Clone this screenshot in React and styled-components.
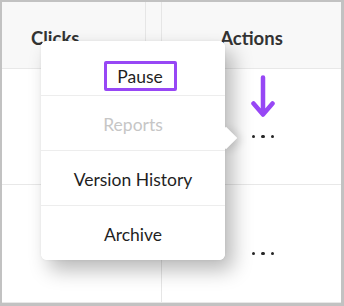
import React from 'react';
import styled, { createGlobalStyle } from 'styled-components';

const GlobalStyle = createGlobalStyle`
  html, body {
    margin: 0;
    padding: 0;
    background: #ffffff;
  }
  body {
    font-family: Lato, "Noto Sans", sans-serif;
  }
`;

const Frame = styled.div`
  position: relative;
  width: 344px;
  height: 306px;
  box-sizing: border-box;
  border-style: solid;
  border-color: #c2c2c2;
  border-width: 2px 3px 3px 2px;
  background: #ffffff;
  overflow: hidden;
`;

const Row = styled.div`
  display: grid;
  grid-template-columns: 144px 16px 1fr;
  height: ${(p) => p.$height}px;
  box-sizing: border-box;
  background: ${(p) => (p.$head ? '#f8f8f8' : '#ffffff')};
  border-bottom: 1px solid #e8e8e8;
`;

const Cell = styled.div`
  display: flex;
  align-items: center;
  justify-content: ${(p) => p.$justify || 'flex-start'};
  padding-left: ${(p) => p.$padLeft || 0}px;
  padding-top: ${(p) => (p.$head ? 5 : 0)}px;
  box-sizing: border-box;
  border-right: ${(p) => (p.$divider ? '1px solid #e6e6e6' : 'none')};
  font-size: 18.5px;
  font-weight: 700;
  color: #333333;
`;

const ActionCell = styled.div`
  display: flex;
  flex-direction: column;
  align-items: center;
  box-sizing: border-box;
  padding-left: 23px;
  padding-top: ${(p) => p.$padTop}px;
`;

const Dots = styled.div`
  display: flex;
  gap: 6px;
  height: 3px;
`;

const Dot = styled.span`
  width: 3.4px;
  height: 3.4px;
  border-radius: 50%;
  background: #262626;
`;

const ArrowIcon = styled.svg`
  display: block;
  margin-bottom: 16px;
`;

const Menu = styled.div`
  position: absolute;
  left: 39px;
  top: 39px;
  width: 184px;
  height: 219px;
  background: #ffffff;
  border-radius: 6px;
  box-shadow: 8px 10px 20px rgba(0, 0, 0, 0.28), 0 0 3px rgba(0, 0, 0, 0.06);
`;

const Caret = styled.div`
  position: absolute;
  left: 177px;
  top: 89px;
  width: 16px;
  height: 16px;
  background: #ffffff;
  transform: rotate(45deg);
  box-shadow: 4px -2px 8px rgba(0, 0, 0, 0.14);
`;

const MenuList = styled.div`
  position: relative;
  display: flex;
  flex-direction: column;
  background: #ffffff;
  border-radius: 6px;
  overflow: hidden;
  height: 100%;
`;

const Item = styled.div`
  display: flex;
  align-items: ${(p) => (p.$first ? 'flex-start' : 'center')};
  justify-content: center;
  height: ${(p) => (p.$first ? 54 : 55)}px;
  box-sizing: border-box;
  padding-top: ${(p) => (p.$first ? 20 : 2)}px;
  border-top: ${(p) => (p.$first ? 'none' : '1px solid #ededed')};
  font-size: 17.5px;
  color: ${(p) => (p.$disabled ? '#c6c6c6' : '#1f1f1f')};
`;

const Highlight = styled.span`
  display: flex;
  align-items: center;
  justify-content: center;
  width: 73px;
  height: 30px;
  box-sizing: border-box;
  margin-left: 14px;
  border: 3.5px solid #9747f5;
  border-radius: 2px;
`;

const DownArrow = () => (
  <ArrowIcon width="24" height="44" viewBox="0 0 24 44">
    <path
      d="M12 2.5 V39 M2.5 28.5 L12 39.5 L21.5 28.5"
      fill="none"
      stroke="#9747f5"
      strokeWidth="4.5"
      strokeLinecap="round"
      strokeLinejoin="round"
    />
  </ArrowIcon>
);

const More = () => (
  <Dots>
    <Dot />
    <Dot />
    <Dot />
  </Dots>
);

export default function App() {
  return (
    <>
      <GlobalStyle />
      <Frame>
        <Row $head $height={67}>
          <Cell $head $padLeft={29} $divider>Clicks</Cell>
          <Cell $head $divider />
          <Cell $head $justify="center">Actions</Cell>
        </Row>
        <Row $height={116}>
          <Cell />
          <Cell $divider />
          <ActionCell $padTop={6}>
            <DownArrow />
            <More />
          </ActionCell>
        </Row>
        <Row $height={118}>
          <Cell />
          <Cell $divider />
          <ActionCell $padTop={67}>
            <More />
          </ActionCell>
        </Row>
        <Menu>
          <Caret />
          <MenuList>
            <Item $first>
              <Highlight>Pause</Highlight>
            </Item>
            <Item $disabled>Reports</Item>
            <Item>Version History</Item>
            <Item>Archive</Item>
          </MenuList>
        </Menu>
      </Frame>
    </>
  );
}
